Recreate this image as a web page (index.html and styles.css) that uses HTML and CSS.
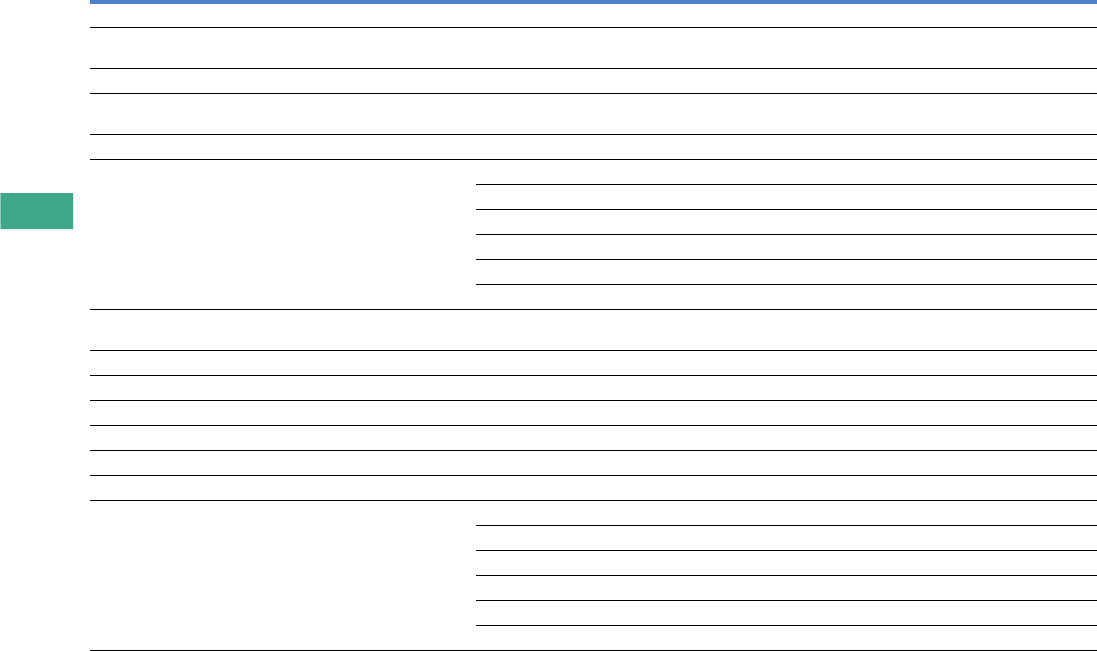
FILE: index.html
```html
<!DOCTYPE html>
<html lang="en">
<head>
    <meta charset="UTF-8">
    <meta name="viewport" content="width=device-width, initial-scale=1.0">
    <title>Sheet</title>
    <link rel="stylesheet" href="styles.css">
</head>
<body>

    <div class="side-tab"></div>

    <div class="sheet">
        <div class="row head"></div>
        <div class="row tall"></div>
        <div class="row"></div>
        <div class="row tall"></div>
        <div class="row"></div>

        <div class="group">
            <div class="cell label"></div>
            <div class="cell"></div>
            <div class="cell"></div>
            <div class="cell"></div>
            <div class="cell"></div>
            <div class="cell"></div>
            <div class="cell"></div>
        </div>

        <div class="row tall"></div>
        <div class="row"></div>
        <div class="row"></div>
        <div class="row"></div>
        <div class="row"></div>
        <div class="row"></div>
        <div class="row"></div>

        <div class="group">
            <div class="cell label"></div>
            <div class="cell"></div>
            <div class="cell"></div>
            <div class="cell"></div>
            <div class="cell"></div>
            <div class="cell"></div>
            <div class="cell"></div>
        </div>
    </div>

</body>
</html>
```

FILE: styles.css
```css
/* page */
body {
    font-family: 'Liberation Sans', Arial, sans-serif;
    background: #fff;
    margin: 0;
    padding: 0;
    overflow: hidden;
}

/* green tab on the left edge */
.side-tab {
    position: absolute;
    left: 0;
    top: 193px;
    width: 72px;
    height: 36px;
    background-color: #3da78a;
    border-left: 1px solid #93cdbb;
    box-shadow: 1px 1px 0 rgba(0, 0, 0, 0.08);
}

.sheet {
    margin-left: 90px;
    width: 1007px;
    border-top: 4px solid #4d80c9;
}

.row,
.cell {
    box-sizing: border-box;
    height: 25px;
    border-bottom: 1px solid #000;
}

.row.head {
    height: 24px;
}

.row.tall {
    height: 41px;
}

.group {
    display: grid;
    grid-template-columns: 386px 1fr;
    grid-auto-rows: 25px;
}

.group .label {
    grid-row: span 6;
    height: auto;
}
```
